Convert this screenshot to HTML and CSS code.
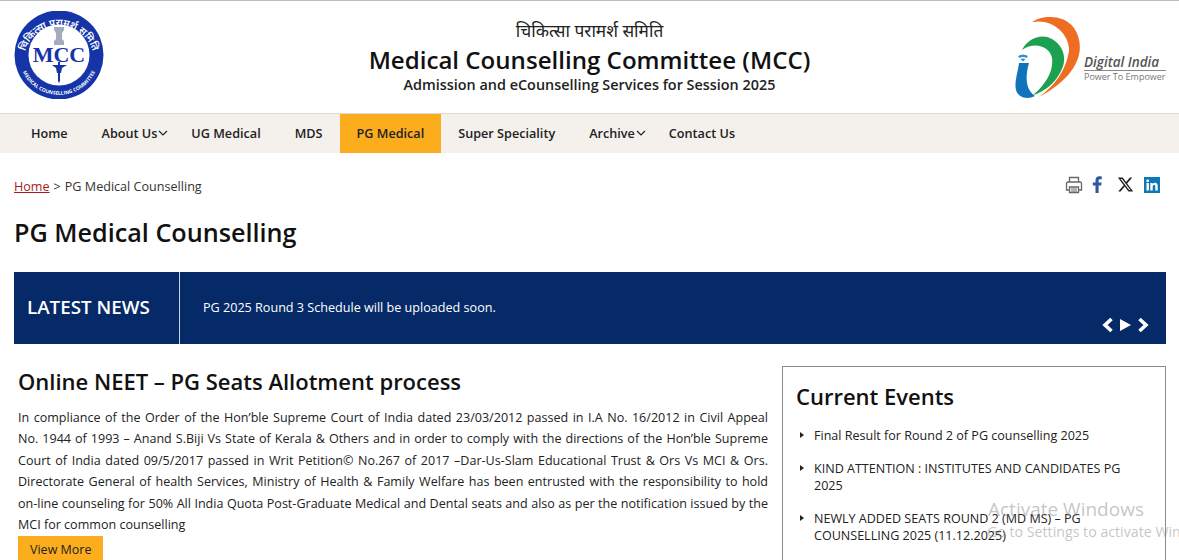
FILE: index.html
```html
<!DOCTYPE html>
<html lang="en">
<head>
<meta charset="utf-8">
<title>PG Medical Counselling</title>
<link rel="stylesheet" href="styles.css">
</head>
<body>
<header class="masthead">
  <svg class="mcc-logo" width="90" height="88" viewBox="0 0 90 88" aria-label="MCC logo">
    <defs>
      <path id="arcTop" d="M10 50 A35 35 0 0 1 80 50"/>
      <path id="arcBottom" d="M6.500 33 A40 40 0 1 0 83.500 33"/>
    </defs>
    <circle cx="45" cy="44" r="44.500" fill="#1434a8"/>
    <circle cx="45" cy="44" r="30.500" fill="#fff"/>
    <text class="logo-ring-top"><textPath href="#arcTop" startOffset="50%" text-anchor="middle">चिकित्सा परामर्श समिति</textPath></text>
    <text class="logo-ring-bottom"><textPath href="#arcBottom" startOffset="50%" text-anchor="middle">MEDICAL COUNSELLING COMMITTEE</textPath></text>
    <path d="M40 16h10v3l-2 3v6l2 2v4H40v-4l2-2v-6l-2-3z" fill="#a3abbd"/>
    <text class="logo-mcc" x="45" y="51" text-anchor="middle">MCC</text>
    <path d="M44 51h2l0 19-1 2-1-2z" fill="#1434a8"/>
    <path d="M38 54h15l-5 3-1 5h-4l-1-5z" fill="#1434a8"/>
  </svg>
  <div class="masthead-title">
    <p class="hindi">चिकित्सा परामर्श समिति</p>
    <h1>Medical Counselling Committee (MCC)</h1>
    <p class="sub">Admission and eCounselling Services for Session 2025</p>
  </div>
  <div class="di-logo">
    <svg class="di-mark" width="70" height="83" viewBox="0 0 70 83" aria-hidden="true">
      <path d="M18 6C28 -1 50 -2 60 12C72 30 68 58 25 81C40 70 52 55 55 35C56 18 38 2 18 6Z" fill="#ef6c23"/>
      <path d="M8 34C14 22 28 17 38 23C50 30 54 44 46 57C40 68 30 76 19 79C30 70 40 56 38 42C36 30 20 25 8 34Z" fill="#1ba14f"/>
      <path d="M5 47H15C12 58 10 72 21 80C14 84 4 82 2 74C0 66 4 56 5 47Z" fill="#1174bb"/>
      <path d="M4 40q5-3 10 0l-1.500 2q-3.500-2-7 0zM6.500 43q2.500-1 5 0l-2.500 2.500z" fill="#2f8fd0"/>
    </svg>
    <div class="di-text">
      <span class="di-name">Digital India</span>
      <span class="di-tag">Power To Empower</span>
    </div>
  </div>
</header>

<nav class="main-nav">
  <a href="#">Home</a>
  <a href="#" class="has-sub">About Us<svg class="caret" width="10" height="6" viewBox="0 0 10 6"><path d="M1 1l4 4 4-4" fill="none" stroke="#222" stroke-width="1.200"/></svg></a>
  <a href="#">UG Medical</a>
  <a href="#">MDS</a>
  <a href="#" class="active">PG Medical</a>
  <a href="#">Super Speciality</a>
  <a href="#" class="has-sub">Archive<svg class="caret" width="10" height="6" viewBox="0 0 10 6"><path d="M1 1l4 4 4-4" fill="none" stroke="#222" stroke-width="1.200"/></svg></a>
  <a href="#">Contact Us</a>
</nav>

<main class="page">
  <div class="crumb-row">
    <div class="crumbs"><a href="#">Home</a><span class="sep">&gt;</span>PG Medical Counselling</div>
    <div class="share">
      <svg class="share-print" width="18" height="18" viewBox="0 0 18 18" aria-label="Print"><path d="M4.500 6V1.500h9V6M4 14H1.500V7.500q0-1.500 1.500-1.500h12q1.500 0 1.500 1.500V14H14M4.500 11h9v5.500h-9z" fill="none" stroke="#666" stroke-width="1.300"/><path d="M6 13h6M6 15h6" stroke="#666"/></svg>
      <svg class="share-fb" width="12" height="17" viewBox="0 0 12 17" aria-label="Facebook"><path d="M3.500 17V9.500H.8V6.500h2.700V4.400C3.500 1.700 5 .3 7.400.3c1 0 2 .1 2.400.2v2.700H8.200c-1.300 0-1.600.6-1.600 1.500v1.800h3l-.4 3H6.600V17z" fill="#2d5a9a"/></svg>
      <svg class="share-x" width="17" height="17" viewBox="0 0 24 24" aria-label="X"><path d="M18.244 2.250h3.308l-7.227 8.260 8.502 11.240H16.170l-5.214-6.817L4.990 21.750H1.680l7.730-8.835L1.254 2.250H8.080l4.713 6.231zm-1.161 17.520h1.833L7.084 4.126H5.117z" fill="#222"/></svg>
      <svg class="share-in" width="16" height="16" viewBox="0 0 16 16" aria-label="LinkedIn"><rect width="16" height="16" fill="#0f78b4"/><rect x="2.500" y="6" width="2.400" height="7.500" fill="#fff"/><circle cx="3.700" cy="3.800" r="1.400" fill="#fff"/><path d="M6.300 6h2.300v1.100C9 6.400 9.900 5.800 11 5.800c2 0 2.700 1.300 2.700 3.300v4.400h-2.400V9.600c0-1-.3-1.700-1.200-1.700S8.700 8.600 8.700 9.600v3.900H6.300z" fill="#fff"/></svg>
    </div>
  </div>

  <h2 class="page-title">PG Medical Counselling</h2>

  <section class="news">
    <div class="news-label">LATEST NEWS</div>
    <div class="news-body">
      <p>PG 2025 Round 3 Schedule will be uploaded soon.</p>
      <div class="news-controls">
        <svg width="13" height="16" viewBox="0 0 13 16"><path d="M10.500 2L4 8 10.500 14" fill="none" stroke="#fff" stroke-width="3.600"/></svg>
        <svg width="11" height="12" viewBox="0 0 11 12"><path d="M0 0l11 6-11 6z" fill="#fff"/></svg>
        <svg width="13" height="16" viewBox="0 0 13 16"><path d="M2.500 2L9 8 2.500 14" fill="none" stroke="#fff" stroke-width="3.600"/></svg>
      </div>
    </div>
  </section>

  <div class="columns">
    <article class="lead">
      <h3>Online NEET – PG Seats Allotment process</h3>
      <p>In compliance of the Order of the Hon’ble Supreme Court of India dated 23/03/2012 passed in I.A No. 16/2012 in Civil Appeal No.&nbsp;1944 of 1993 – Anand S.Biji Vs State of Kerala &amp; Others and in order to comply with the directions of the Hon’ble Supreme Court of India dated 09/5/2017 passed in Writ Petition© No.267 of 2017 –Dar-Us-Slam Educational Trust &amp; Ors Vs MCI &amp; Ors. Directorate General of health Services, Ministry of Health &amp; Family Welfare has been entrusted with the responsibility to hold on-line counseling for 50% All India Quota Post-Graduate Medical and Dental seats and also as per the notification issued by the MCI for common counselling</p>
      <a href="#" class="btn">View More</a>
    </article>
    <aside class="events">
      <h3>Current Events</h3>
      <ul>
        <li>Final Result for Round 2 of PG counselling 2025</li>
        <li>KIND ATTENTION : INSTITUTES AND CANDIDATES PG 2025</li>
        <li>NEWLY ADDED SEATS ROUND 2 (MD MS) – PG COUNSELLING 2025 (11.12.2025)</li>
      </ul>
    </aside>
  </div>
</main>

<div class="activate">
  <div class="activate-title">Activate Windows</div>
  <div class="activate-sub">Go to Settings to activate Windows.</div>
</div>
</body>
</html>
```
FILE: styles.css
```css
* { box-sizing: border-box; }
html, body { margin: 0; padding: 0; height: 560px; overflow: hidden; background: #fff; }
body { font-family: "Open Sans", "Noto Sans", "Noto Sans CJK SC", sans-serif; color: #222; position: relative; }
a { color: inherit; text-decoration: none; }
h1, h2, h3, p, ul { margin: 0; padding: 0; }

.masthead { height: 114px; border-top: 1px solid #bdbdbd; border-bottom: 1px solid #ded9d2; padding: 10px 14px 0; display: flex; align-items: flex-start; }
.mcc-logo { flex: none; }
.logo-ring-top { font-size: 10px; fill: #fff; font-weight: 600; }
.logo-ring-bottom { font-size: 5px; fill: #fff; font-weight: 700; }
.logo-mcc { font-family: "Liberation Serif", serif; font-weight: 700; font-size: 22px; fill: #1434a8; }
.masthead-title { flex: 1; text-align: center; padding-top: 8px; margin-left: 61px; }
.hindi { font-size: 17.300px; line-height: 24px; color: #222; }
.masthead-title h1 { font-size: 24.100px; line-height: 32px; font-weight: 600; color: #111; margin-top: 1px; }
.sub { font-size: 14.400px; line-height: 20px; font-weight: 600; color: #222; margin-top: -1px; }
.di-logo { flex: none; width: 152px; display: flex; margin-top: 5px; margin-right: -1px; height: 83px; }
.di-mark { flex: none; }
.di-text { display: flex; flex-direction: column; align-self: flex-start; margin-top: 38px; }
.di-name { font-size: 13.500px; font-style: italic; font-weight: 600; color: #555; line-height: 16px; border-bottom: 1px solid #888; white-space: nowrap; }
.di-tag { font-size: 9px; color: #777; line-height: 12px; white-space: nowrap; }

.main-nav { height: 39px; background: #f4f1ec; display: flex; padding-left: 14px; }
.main-nav a { font-size: 12.650px; font-weight: 600; color: #222; line-height: 39px; padding: 0 17px; display: flex; align-items: center; }
.main-nav a.has-sub { padding-right: 0; margin-right: 6px; }
.caret { margin-left: 1px; margin-top: -2px; }
.main-nav a.active { background: #fcad1e; }

.page { padding: 0 13px 0 14px; }
.crumb-row { display: flex; justify-content: space-between; align-items: center; height: 34px; margin-top: 16px; }
.crumbs { font-size: 12.600px; color: #333; }
.crumbs a { color: #a81c1c; text-decoration: underline; }
.sep { margin: 0 4px; }
.share { display: flex; align-items: center; padding-right: 6px; margin-top: -3px; }
.share-fb { margin-left: 9px; }
.share-x { margin-left: 13px; }
.share-in { margin-left: 10px; }
.page-title { font-size: 25.200px; line-height: 34px; font-weight: 600; color: #111; margin-top: 12px; }
.news { margin-top: 23px; height: 72px; background: #062a68; color: #fff; display: flex; }
.news-label { width: 166px; border-right: 1px solid #c9d2e0; font-size: 18.800px; font-weight: 600; padding-left: 13px; line-height: 70px; }
.news-body { flex: 1; position: relative; padding-left: 23px; }
.news-body p { font-size: 12.600px; line-height: 71px; }
.news-controls { position: absolute; right: 16px; bottom: 11px; display: flex; gap: 6px; align-items: center; }

.columns { display: flex; gap: 13px; margin-top: 22px; }
.lead { width: 755px; padding-left: 4px; padding-right: 1px; }
.lead h3 { font-size: 22px; line-height: 30px; font-weight: 600; color: #111; }
.lead p { font-size: 12.550px; line-height: 21.400px; text-align: justify; margin-top: 11px; color: #222; }
.btn { display: inline-block; background: #fcad1e; font-size: 12.500px; color: #222; line-height: 27px; padding: 0 12px; margin-top: 1px; }
.events { width: 384px; height: 260px; border: 1px solid #8a8a8a; padding: 13px 13px; }
.events h3 { font-size: 22px; line-height: 32px; font-weight: 600; color: #111; }
.events ul { list-style: none; margin-top: 15px; padding-right: 14px; }
.events li { font-size: 12.550px; line-height: 17px; padding-left: 18px; margin-bottom: 16px; position: relative; color: #222; }
.events li::before { content: ""; position: absolute; left: 4px; top: 5px; border-left: 4px solid #222; border-top: 3.500px solid transparent; border-bottom: 3.500px solid transparent; }

.activate { position: absolute; left: 988px; top: 497px; white-space: nowrap; color: rgba(140,140,140,.5); }
.activate-title { font-size: 19px; line-height: 24px; }
.activate-sub { font-size: 14.200px; line-height: 20px; margin-left: -1px; margin-top: 1px; }
```
